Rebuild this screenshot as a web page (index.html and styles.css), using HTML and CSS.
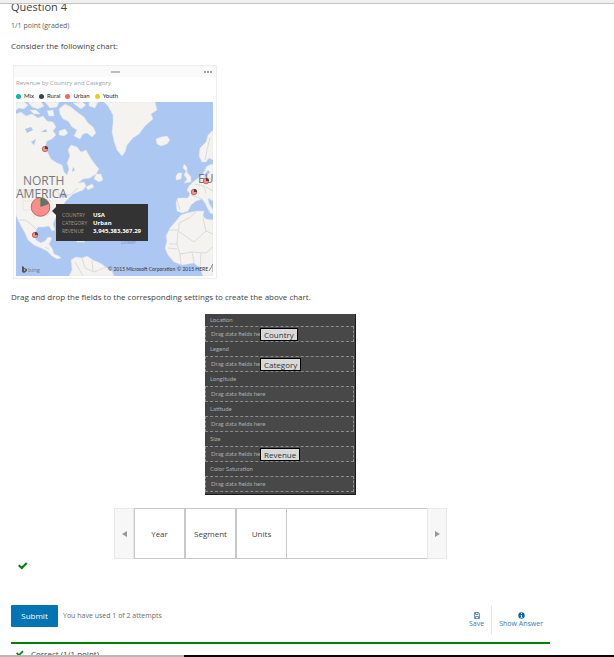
FILE: index.html
```html
<!DOCTYPE html>
<html lang="en">
<head>
<meta charset="utf-8">
<title>Question 4</title>
<link rel="stylesheet" href="styles.css">
</head>
<body>
<div class="topbar"></div>
<main class="problem">
  <h1 class="title">Question 4</h1>
  <p class="points">1/1 point (graded)</p>
  <p class="prompt">Consider the following chart:</p>

  <section class="chart">
    <div class="chart-bar"><span class="grip"></span><span class="more"><i></i><i></i><i></i></span></div>
    <h2 class="chart-title">Revenue by Country and Category</h2>
    <ul class="legend">
      <li><span class="dot mix"></span>Mix</li>
      <li><span class="dot rural"></span>Rural</li>
      <li><span class="dot urban"></span>Urban</li>
      <li><span class="dot youth"></span>Youth</li>
    </ul>
    <div class="map">
      <svg class="map-art" viewBox="0 0 197 174" role="img" aria-label="Revenue map">
        <rect width="197" height="174" fill="#abc7f2"/>
        <g fill="#f4f3ef" stroke="#dfe3e6" stroke-width=".5" stroke-linejoin="round">
          <path d="M0 12 5 10 10 14 16 12 22 16 27 14 31 19 37 20 40 25 37 29 40 33 36 37 31 39 29 45 32 51 35 57 41 61 46 63 48 70 51 73 53 67 51 61 54 54 52 48 55 43 61 45 65 50 70 48 74 55 78 61 83 67 80 72 74 76 67 77 62 81 68 80 70 84 67 88 62 90 57 92 52 97 49 100 46 105 42 111 39 117 37 122 39 128 36 129 33 124 28 125 22 125 19 131 20 138 25 141 29 139 32 135 36 136 33 142 36 146 38 152 43 154 45 156 41 157 36 154 31 149 25 146 18 143 12 138 9 131 5 124 2 118 0 113z"/>
          <path d="M0 0H8L12 3 8 7 3 6 0 8zM12 0H25L28 4 22 7 16 5zM29 0H43L41 5 34 6zM14 8 20 8 24 12 18 12zM43 7 49 2 55 5 61 10 68 15 72 21 77 25 80 31 76 35 71 31 67 32 64 37 58 34 61 28 56 25 52 19 47 17 44 12zM43 29 49 27 52 31 48 34 43 33zM57 1 66 0 70 3 65 7zM73 0 82 0 79 6 73 4zM31 9 37 8 38 14 33 14z"/>
          <path d="M88 0 92 4 97 13 97 21 96 30 98 39 101 48 106 54 109 50 111 43 117 36 123 32 129 24 137 17 135 12 141 8 139 0z"/>
          <path d="M140 37 145 35 151 34 154 38 151 42 145 44 141 42zM80 72 85 72 87 78 83 80 78 77zM70 85 76 82 78 85 72 88z"/>
          <path d="M197 28 192 33 190 40 184 46 183 54 186 60 190 60 193 56 197 58zM168 62 171 65 171 70 175 75 175 80 168 81 171 77 168 73 170 69 167 66zM162 71 166 71 165 77 160 78 160 74z"/>
          <path d="M197 62 191 64 187 72 181 77 177 80 173 84 171 88 174 92 172 96 162 96 160 100 161 109 166 111 172 109 175 103 180 99 186 97 189 101 192 107 194 111 197 112V108L193 101 192 96 197 99z"/>
          <path d="M165 113 171 111 181 109 188 109 187 114 190 117 197 118V174H187L184 166 178 161 166 163 158 160 152 153 149 146 151 139 150 134 154 126 160 119z"/>
          <path d="M55 158 60 155 66 156 71 154 77 158 84 161 90 165 96 169 98 174H53L56 168zM42 132 49 132 56 137 49 136zM60 137 66 137 69 140 61 140z"/>
        </g>
        <g fill="#abc7f2"><path d="M42 93 48 91 52 94 47 96zM15 40 20 37 18 43zM9 27 15 25 17 28 11 31zM25 30 30 27 31 30zM57 65 59 68 56 70zM188 73 192 68 194 70 190 75z"/></g>
        <g fill="none" stroke="#c9c9d2" stroke-width=".6">
          <path d="M0 88H38L44 92 54 93 62 86M3 118 9 118 15 122 21 128M29 145 33 147M66 156 69 166 78 170 90 165M76 158 77 169M59 160 67 174"/>
          <path d="M161 98 164 108M175 93 186 97M179 82 188 84 190 91M187 74 197 78M190 85 197 89M194 35 191 48 189 58M153 128 163 128 163 121 173 116 180 110M153 142 161 142 162 129 178 140 190 129 187 116M161 142 164 152 176 150 190 151 197 145M190 129 197 132M164 152 165 163M176 150 178 161M185 151 184 166M152 146 161 147"/>
          <path d="M7 88V108H31V90M18 88V117M7 99H35" stroke="#e2e0df"/>
        </g>
        <g class="region" fill="#77787b">
          <text x="7" y="83">NORTH</text><text x="0" y="96">AMERICA</text><text x="182" y="81">EU</text>
        </g>
        <text x="105" y="142" class="ocean">Ocean</text>
        <g stroke="#b65355" stroke-width=".8" fill="#fd8d8b">
          <circle cx="24.5" cy="105" r="9.3"/><circle cx="29" cy="47" r="2.7"/><circle cx="19" cy="133" r="2.7"/><circle cx="178" cy="90" r="2.8"/><circle cx="190" cy="79" r="2.8"/>
        </g>
        <path d="M24.500 105V96A9 9 0 0 1 33 102z" fill="#657170"/>
        <path d="M24.500 105 22.500 96H25z" fill="#d6ae24"/><path d="M24.500 105 24.500 96H26.500z" fill="#168b7c"/>
        <path d="M29 47V44A3 3 0 0 1 32 47zM19 133V130A3 3 0 0 1 22 133zM178 90V87A3 3 0 0 1 181 90zM190 79V76A3 3 0 0 1 193 79z" fill="#4c4435"/>
        <path d="M6 164 8 165V169L10 168 8 167V166L11 167V169L8 171 6 170z" fill="#555"/>
        <text x="12" y="170" class="brand">bing</text>
        <text x="92" y="169" class="credit">© 2015 Microsoft Corporation</text>
        <text x="161" y="169" class="credit">© 2015 HERE</text>
        <path d="M193 169 197 162V170" fill="none" stroke="#888"/>
      </svg>
      <dl class="tip">
        <dt>COUNTRY</dt><dd>USA</dd>
        <dt>CATEGORY</dt><dd>Urban</dd>
        <dt>REVENUE</dt><dd>3,945,383,367.29</dd>
      </dl>
    </div>
  </section>

  <p class="prompt task">Drag and drop the fields to the corresponding settings to create the above chart.</p>

  <section class="panel">
    <h3>Location</h3><div class="zone">Drag data fields here<button class="field" type="button">Country</button></div>
    <h3>Legend</h3><div class="zone">Drag data fields here<button class="field" type="button">Category</button></div>
    <h3>Longitude</h3><div class="zone">Drag data fields here</div>
    <h3>Latitude</h3><div class="zone">Drag data fields here</div>
    <h3>Size</h3><div class="zone">Drag data fields here<button class="field" type="button">Revenue</button></div>
    <h3>Color Saturation</h3><div class="zone">Drag data fields here</div>
  </section>

  <section class="tray">
    <button class="arrow" type="button" aria-label="Previous"><svg width="5" height="6" viewBox="0 0 5 6"><path d="M5 0V6L0 3z"/></svg></button>
    <div class="tiles">
      <button class="tile" type="button">Year</button>
      <button class="tile" type="button">Segment</button>
      <button class="tile" type="button">Units</button>
    </div>
    <button class="arrow" type="button" aria-label="Next"><svg width="5" height="6" viewBox="0 0 5 6"><path d="M0 0V6L5 3z"/></svg></button>
  </section>

  <div class="status"><svg width="10" height="8" viewBox="0 0 10 8"><path d="M0 4 1.500 2.500 3.700 4.500 8 .3 9.500 1.800 3.800 7.500z"/></svg></div>

  <div class="actions">
    <button class="submit" type="button">Submit</button>
    <span class="attempts">You have used 1 of 2 attempts</span>
    <div class="links">
      <button class="link" type="button"><svg width="6" height="7" viewBox="0 0 6 7"><path d="M.5.5H4.500L5.500 1.500V6.500H.5zM1.500.5V2.500H4V.5M1.500 6.500V4.500H4.500V6.500" fill="none" stroke="#3b78b5" stroke-width=".8"/></svg>Save</button>
      <button class="link" type="button"><svg width="7" height="7" viewBox="0 0 7 7"><circle cx="3.500" cy="3.500" r="3.200" fill="#0a65ab"/><path d="M3 1H4V2H3zM2.500 3H4V5H4.500V5.700H2.500V5H3V3.500H2.500z" fill="#fff"/></svg>Show Answer</button>
    </div>
  </div>

  <div class="result"><svg width="8" height="7" viewBox="0 0 10 8"><path d="M0 4 1.500 2.500 3.700 4.500 8 .3 9.500 1.800 3.800 7.500z"/></svg>Correct (1/1 point)</div>
</main>
<footer class="bottom"></footer>
</body>
</html>
```
FILE: styles.css
```css
* { box-sizing: border-box; }
body {
  margin: 0;
  height: 100vh;
  overflow: hidden;
  background: #fff;
  color: #414141;
  font: 8px/12px "Open Sans", sans-serif;
}
h1, h2, h3, p, ul, dl, dd { margin: 0; padding: 0; font-weight: 400; }
button { font: inherit; color: inherit; padding: 0; }
svg { display: block; }

.topbar {
  position: fixed;
  inset: 0 0 auto;
  height: 4px;
  background: #f0f0f0;
  border-bottom: 1px solid #c4c4c4;
}
.problem { max-width: 550px; padding-left: 11px; }
.title { font-size: 11px; line-height: 14px; }
.points { margin-top: 6px; font-size: 7px; color: #5e5e5e; }
.prompt { margin-top: 8px; }

.chart {
  width: 204px;
  margin: 13px 0 0 2px;
  padding: 0 3px 2px 2px;
  border: 1px solid #eee;
}
.chart-bar {
  display: flex;
  align-items: center;
  justify-content: center;
  position: relative;
  height: 11px;
  margin: 0 -3px 0 -2px;
  background: #fafafa;
}
.grip { width: 9px; height: 2px; background: #bbb; }
.more { position: absolute; right: 4px; display: flex; gap: 1px; }
.more i { width: 2px; height: 2px; background: #aaa; }
.chart-title { font-size: 6px; line-height: 13px; color: #a0a0a0; }
.legend {
  display: flex;
  gap: 5px;
  height: 12px;
  list-style: none;
  font-family: Lato, sans-serif;
  font-size: 6px;
  color: #222;
}
.legend li { display: flex; align-items: center; gap: 3px; }
.dot { width: 5px; height: 5px; border-radius: 50%; }
.mix { background: #01b8aa; }
.rural { background: #374649; }
.urban { background: #fd625e; }
.youth { background: #f2c80f; }

.map { position: relative; }
.map-art { width: 100%; height: auto; }
.region { font-size: 12px; }
.ocean { font-size: 5px; fill: #8095bd; }
.brand { font-size: 6px; fill: #777; }
.credit { font-family: Lato, sans-serif; font-size: 5px; fill: #333; }
.tip {
  position: absolute;
  left: 40px;
  top: 102px;
  width: 92px;
  height: 37px;
  padding: 7px 4px 6px 6px;
  display: grid;
  grid-template-columns: 31px 1fr;
  background: #333;
  font-size: 6px;
  line-height: 8px;
}
.tip::before {
  content: "";
  position: absolute;
  left: -4px;
  top: 3px;
  border: solid transparent;
  border-width: 4px 4px 4px 0;
  border-right-color: #333;
}
.tip dt { font-size: 5px; color: #9b9b9b; }
.tip dd { color: #fff; font-weight: 700; }

.task { margin-top: 12px; }

.panel {
  width: 151px;
  margin: 11px auto 0;
  padding: 0 1px 2px 0;
  background: #434343;
  border-right: 1px solid #1c1c1c;
  border-bottom: 1px solid #1c1c1c;
  color: #adadad;
  font-family: Lato, sans-serif;
  font-size: 6px;
}
.panel h3 { padding-left: 5px; font-size: 6px; line-height: 14px; }
.panel h3:first-child { line-height: 12px; }
.zone {
  position: relative;
  height: 16px;
  padding-left: 5px;
  border: 1px dashed #8c8c8c;
  background: #484848;
  line-height: 14px;
}
.field {
  position: absolute;
  left: 54px;
  top: 1px;
  height: 13px;
  padding: 0 3px;
  border: 1px solid #000;
  background: #d8d8d8;
  color: #333;
  font-family: "Open Sans", sans-serif;
  font-size: 8px;
  line-height: 11px;
}

.tray { display: flex; width: 333px; height: 51px; margin: 13px auto 0; }
.arrow {
  display: flex;
  align-items: center;
  justify-content: center;
  width: 20px;
  border: 1px solid #e8e8e8;
  background: #f7f7f7;
  fill: #999;
}
.tiles {
  display: flex;
  flex: 1;
  border: solid #c8c8c8;
  border-width: 1px 0;
}
.tile {
  width: 51px;
  border: solid #c8c8c8;
  border-width: 0 1px;
  background: #fff;
}

.status { margin: 3px 0 0 7px; fill: #008100; }
.actions { display: flex; align-items: center; height: 30px; margin-top: 31px; }
.submit {
  width: 47px;
  height: 22px;
  border: 0;
  border-radius: 1px;
  background: #0075b4;
  color: #fff;
}
.attempts { margin-left: 5px; font-size: 7px; color: #6a6a6a; }
.links { display: flex; height: 28px; margin: 8px 0 0 auto; }
.link {
  display: flex;
  flex-direction: column;
  align-items: center;
  justify-content: center;
  padding: 0 7px;
  border: 0;
  background: none;
  color: #3b78b5;
  font-size: 7px;
  line-height: 10px;
}
.link + .link { border-left: 1px solid #e4e4e4; }
.result {
  display: flex;
  align-items: center;
  gap: 7px;
  height: 21px;
  margin-top: 11px;
  padding-left: 5px;
  border-top: 2px solid #008100;
  fill: #008100;
}
.bottom {
  position: fixed;
  inset: auto 0 0;
  height: 2px;
  background: linear-gradient(90deg, #b8b8b8 30%, #080808 30%);
}
```
